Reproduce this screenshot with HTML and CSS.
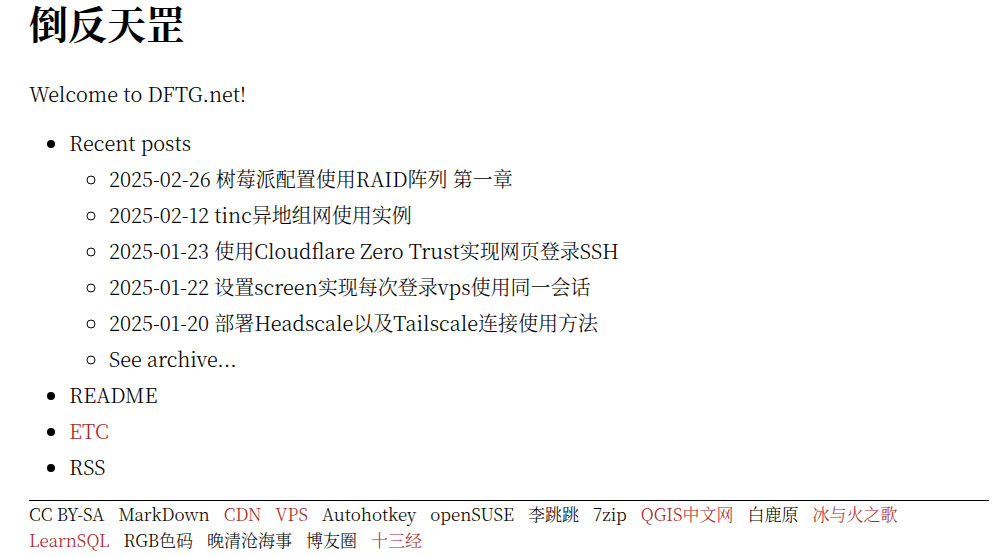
FILE: index.html
```html
<!DOCTYPE html>
<html lang="zh-CN">
<head>
<meta charset="utf-8">
<title>倒反天罡</title>
<link rel="stylesheet" href="styles.css">
</head>
<body>
<main class="page">
<h1 class="title">倒反天罡</h1>
<p class="intro">Welcome to DFTG.net!</p>
<ul class="menu">
<li>Recent posts
<ul class="posts">
<li><a href="#">2025-02-26 树莓派配置使用RAID阵列 第一章</a></li>
<li><a href="#">2025-02-12 tinc异地组网使用实例</a></li>
<li><a href="#">2025-01-23 使用Cloudflare Zero Trust实现网页登录SSH</a></li>
<li><a href="#">2025-01-22 设置screen实现每次登录vps使用同一会话</a></li>
<li><a href="#">2025-01-20 部署Headscale以及Tailscale连接使用方法</a></li>
<li><a href="#">See archive...</a></li>
</ul>
</li>
<li><a href="#">README</a></li>
<li><a class="accent" href="#">ETC</a></li>
<li><a href="#">RSS</a></li>
</ul>
<footer class="footer">
<a href="#">CC BY-SA</a>
<a href="#">MarkDown</a>
<a class="accent" href="#">CDN</a>
<a class="accent" href="#">VPS</a>
<a href="#">Autohotkey</a>
<a href="#">openSUSE</a>
<a href="#">李跳跳</a>
<a href="#">7zip</a>
<a class="accent" href="#">QGIS中文网</a>
<a href="#">白鹿原</a>
<a class="accent" href="#">冰与火之歌</a>
<a class="accent" href="#">LearnSQL</a>
<a href="#">RGB色码</a>
<a href="#">晚清沧海事</a>
<a href="#">博友圈</a>
<a class="accent" href="#">十三经</a>
</footer>
</main>
</body>
</html>
```
FILE: styles.css
```css
body {
  margin: 0;
  background: #fff;
  color: #000;
  font-family: "Noto Serif CJK SC", "Source Han Serif SC", "Noto Serif SC", "Liberation Serif", "Noto Sans CJK SC", serif;
  font-size: 20px;
  font-weight: 300;
  line-height: 36px;
}
.page { padding: 0 16px 0 29px; }
.title { margin: 0; font-size: 39px; font-weight: 700; line-height: 44px; }
.intro { margin: 32px 0 13px; }
.menu { margin: 0; padding-left: 40px; }
.posts { margin: 0; padding-left: 40px; }
a { color: inherit; text-decoration: none; }
.accent { color: #a52a2a; }
.footer {
  display: flex;
  flex-wrap: wrap;
  column-gap: 14px;
  margin-top: 15px;
  border-top: 1px solid #000;
  font-size: 17px;
  line-height: 26px;
}
```
